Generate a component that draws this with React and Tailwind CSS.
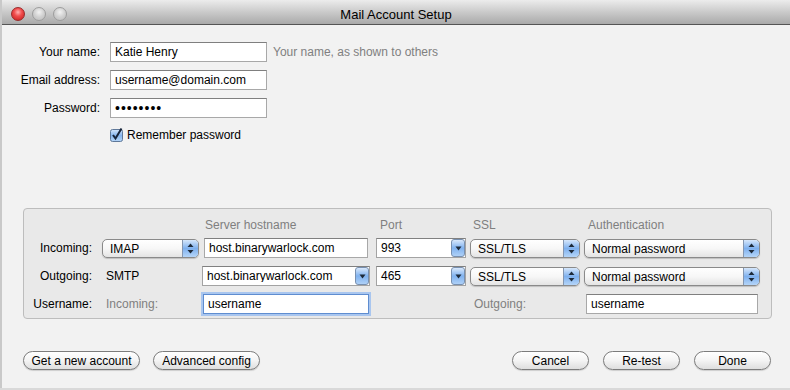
import React from 'react';

function UpDown() {
  return (
    <svg width="7" height="11" viewBox="0 0 7 11">
      <path d="M3.5 0.5 L6.5 4 L0.5 4 Z" fill="#1d2a3a" />
      <path d="M3.5 10.5 L6.5 7 L0.5 7 Z" fill="#1d2a3a" />
    </svg>
  );
}

function Down() {
  return (
    <svg width="7" height="5" viewBox="0 0 7 5">
      <path d="M0.5 0.5 L6.5 0.5 L3.5 4.5 Z" fill="#1d2a3a" />
    </svg>
  );
}

function Popup({ value, width }) {
  return (
    <div
      className={`flex h-[19px] items-center overflow-hidden rounded-[5px] border border-[#8a8a8a] bg-gradient-to-b from-white via-[#f7f7f7] to-[#e4e4e4] shadow-[0_1px_1px_rgba(0,0,0,0.18)] ${width}`}
    >
      <span className="flex-1 truncate pl-[7px] text-[12px] leading-none text-black">{value}</span>
      <span className="flex h-full w-[16px] items-center justify-center border-l border-[#8496b0] bg-gradient-to-b from-[#d6e7fb] via-[#7eb0ee] to-[#b5d5f8]">
        <UpDown />
      </span>
    </div>
  );
}

function Combo({ value, width }) {
  return (
    <div
      className={`flex h-[20px] items-center border border-[#a3a3a3] border-t-[#808080] bg-white ${width}`}
    >
      <span className="flex-1 truncate pl-[4px] text-[12px] leading-none text-black">{value}</span>
      <span className="flex h-[18px] w-[14px] items-center justify-center rounded-[3px] border border-[#7890b0] bg-gradient-to-b from-[#d9e8fb] via-[#80b2ef] to-[#aed0f7]">
        <Down />
      </span>
    </div>
  );
}

function Field({ value, width, focus }) {
  return (
    <div
      className={`flex h-[20px] items-center border bg-white ${width} ${
        focus
          ? 'border-[#5f8dd0] shadow-[0_0_0_2px_#a9c6ef]'
          : 'border-[#a8a8a8] border-t-[#7f7f7f]'
      }`}
    >
      <span className="pl-[4px] text-[12px] leading-none text-black">{value}</span>
    </div>
  );
}

function AquaButton({ children, width }) {
  return (
    <button
      className={`flex h-[19px] items-center justify-center rounded-full border border-[#7c7c7c] bg-gradient-to-b from-white via-[#f4f4f4] to-[#dedede] text-[12px] leading-none text-black shadow-[0_1px_1px_rgba(0,0,0,0.15)] ${width}`}
    >
      {children}
    </button>
  );
}

function Light({ red }) {
  return red ? (
    <span className="h-[14px] w-[14px] rounded-full border border-[#9b2a2a] bg-[radial-gradient(circle_at_50%_35%,#ffb0b0_0%,#f04d4d_40%,#c41b1b_100%)]" />
  ) : (
    <span className="h-[14px] w-[14px] rounded-full border border-[#9d9d9d] bg-[radial-gradient(circle_at_50%_35%,#f2f2f2_0%,#d0d0d0_50%,#bdbdbd_100%)]" />
  );
}

export default function App() {
  return (
    <div className="h-[390px] w-[790px] overflow-hidden bg-[#d9d9d9] font-['Liberation_Sans',sans-serif]">
      <div className="flex h-[388px] w-[790px] flex-col border-l-2 border-[#c9c9c9] bg-[#f2f2f2]">
        {/* title bar */}
        <div className="relative flex h-[25px] items-center border-b border-[#555555] bg-gradient-to-b from-[#ececec] via-[#cacaca] to-[#aaaaaa]">
          <div className="flex items-center gap-[7px] pl-[9px] pt-[3px]">
            <Light red />
            <Light />
            <Light />
          </div>
          <div className="absolute inset-x-0 top-[5px] text-center text-[13px] text-black">Mail Account Setup</div>
        </div>

        {/* top form */}
        <div className="flex flex-col gap-[8px] pt-[17px]">
          <div className="flex items-center">
            <span className="w-[98px] text-right text-[12px] text-black">Your name:</span>
            <div className="ml-[10px]">
              <Field value="Katie Henry" width="w-[157px]" />
            </div>
            <span className="ml-[6px] text-[12px] text-[#808080]">Your name, as shown to others</span>
          </div>
          <div className="flex items-center">
            <span className="w-[98px] text-right text-[12px] text-black">Email address:</span>
            <div className="ml-[10px]">
              <Field value="username@domain.com" width="w-[157px]" />
            </div>
          </div>
          <div className="flex items-center">
            <span className="w-[98px] text-right text-[12px] text-black">Password:</span>
            <div className="ml-[10px] flex h-[20px] w-[157px] items-center border border-[#a8a8a8] border-t-[#7f7f7f] bg-white">
              <span className="pl-[4px] text-[14px] leading-none tracking-[1px] text-black">••••••••</span>
            </div>
          </div>
          <div className="ml-[108px] flex items-center gap-[4px]">
            <svg width="13" height="14" viewBox="0 0 13 14">
              <defs>
                <linearGradient id="cb" x1="0" y1="0" x2="0" y2="1">
                  <stop offset="0" stopColor="#d5e6fb" />
                  <stop offset="0.5" stopColor="#86b5ee" />
                  <stop offset="1" stopColor="#b6d6f8" />
                </linearGradient>
              </defs>
              <rect x="0.5" y="1.5" width="12" height="12" rx="2" fill="url(#cb)" stroke="#5f7899" />
              <path d="M3 7 L5.5 10.5 L11.5 0.5" fill="none" stroke="#17243a" strokeWidth="2" />
            </svg>
            <span className="text-[12px] text-black">Remember password</span>
          </div>
        </div>

        {/* server settings */}
        <div className="ml-[21px] mr-[18px] mt-[64px] rounded-[4px] border border-[#bdbdbd] bg-[#e9e9e9] pb-[4px] pt-[7px]">
          <div className="grid grid-cols-[78px_100px_174px_94px_114px_176px] grid-rows-[22px_28px_28px_20px] items-start text-[12px]">
            <span />
            <span />
            <span className="pl-[3px] leading-[18px] text-[#7f7f7f]">Server hostname</span>
            <span className="pl-[4px] leading-[18px] text-[#7f7f7f]">Port</span>
            <span className="pl-[3px] leading-[18px] text-[#7f7f7f]">SSL</span>
            <span className="pl-[4px] leading-[18px] text-[#7f7f7f]">Authentication</span>

            <span className="flex h-[20px] items-center justify-end pr-[10px] text-black">Incoming:</span>
            <div className="pt-[1px]">
              <Popup value="IMAP" width="w-[97px]" />
            </div>
            <div className="pl-[2px]">
              <Field value="host.binarywarlock.com" width="w-[164px]" />
            </div>
            <Combo value="993" width="w-[90px]" />
            <div className="pt-[1px]">
              <Popup value="SSL/TLS" width="w-[110px]" />
            </div>
            <div className="pt-[1px]">
              <Popup value="Normal password" width="w-[176px]" />
            </div>

            <span className="flex h-[20px] items-center justify-end pr-[10px] text-black">Outgoing:</span>
            <span className="flex h-[20px] items-center pl-[4px] text-black">SMTP</span>
            <Combo value="host.binarywarlock.com" width="w-[168px]" />
            <Combo value="465" width="w-[90px]" />
            <div className="pt-[1px]">
              <Popup value="SSL/TLS" width="w-[110px]" />
            </div>
            <div className="pt-[1px]">
              <Popup value="Normal password" width="w-[176px]" />
            </div>

            <span className="flex h-[20px] items-center justify-end pr-[10px] text-black">Username:</span>
            <span className="flex h-[20px] items-center pl-[4px] text-[#808080]">Incoming:</span>
            <div className="pl-[1px]">
              <Field value="username" width="w-[166px]" focus />
            </div>
            <span />
            <span className="flex h-[20px] items-center pl-[4px] text-[#808080]">Outgoing:</span>
            <div className="pl-[2px]">
              <Field value="username" width="w-[172px]" />
            </div>
          </div>
        </div>

        {/* buttons */}
        <div className="ml-[21px] mr-[19px] mt-[32px] flex items-center">
          <AquaButton width="w-[117px]">Get a new account</AquaButton>
          <div className="ml-[13px]">
            <AquaButton width="w-[107px]">Advanced config</AquaButton>
          </div>
          <div className="ml-auto flex gap-[14px]">
            <AquaButton width="w-[77px]">Cancel</AquaButton>
            <AquaButton width="w-[77px]">Re-test</AquaButton>
            <AquaButton width="w-[77px]">Done</AquaButton>
          </div>
        </div>
      </div>
    </div>
  );
}
